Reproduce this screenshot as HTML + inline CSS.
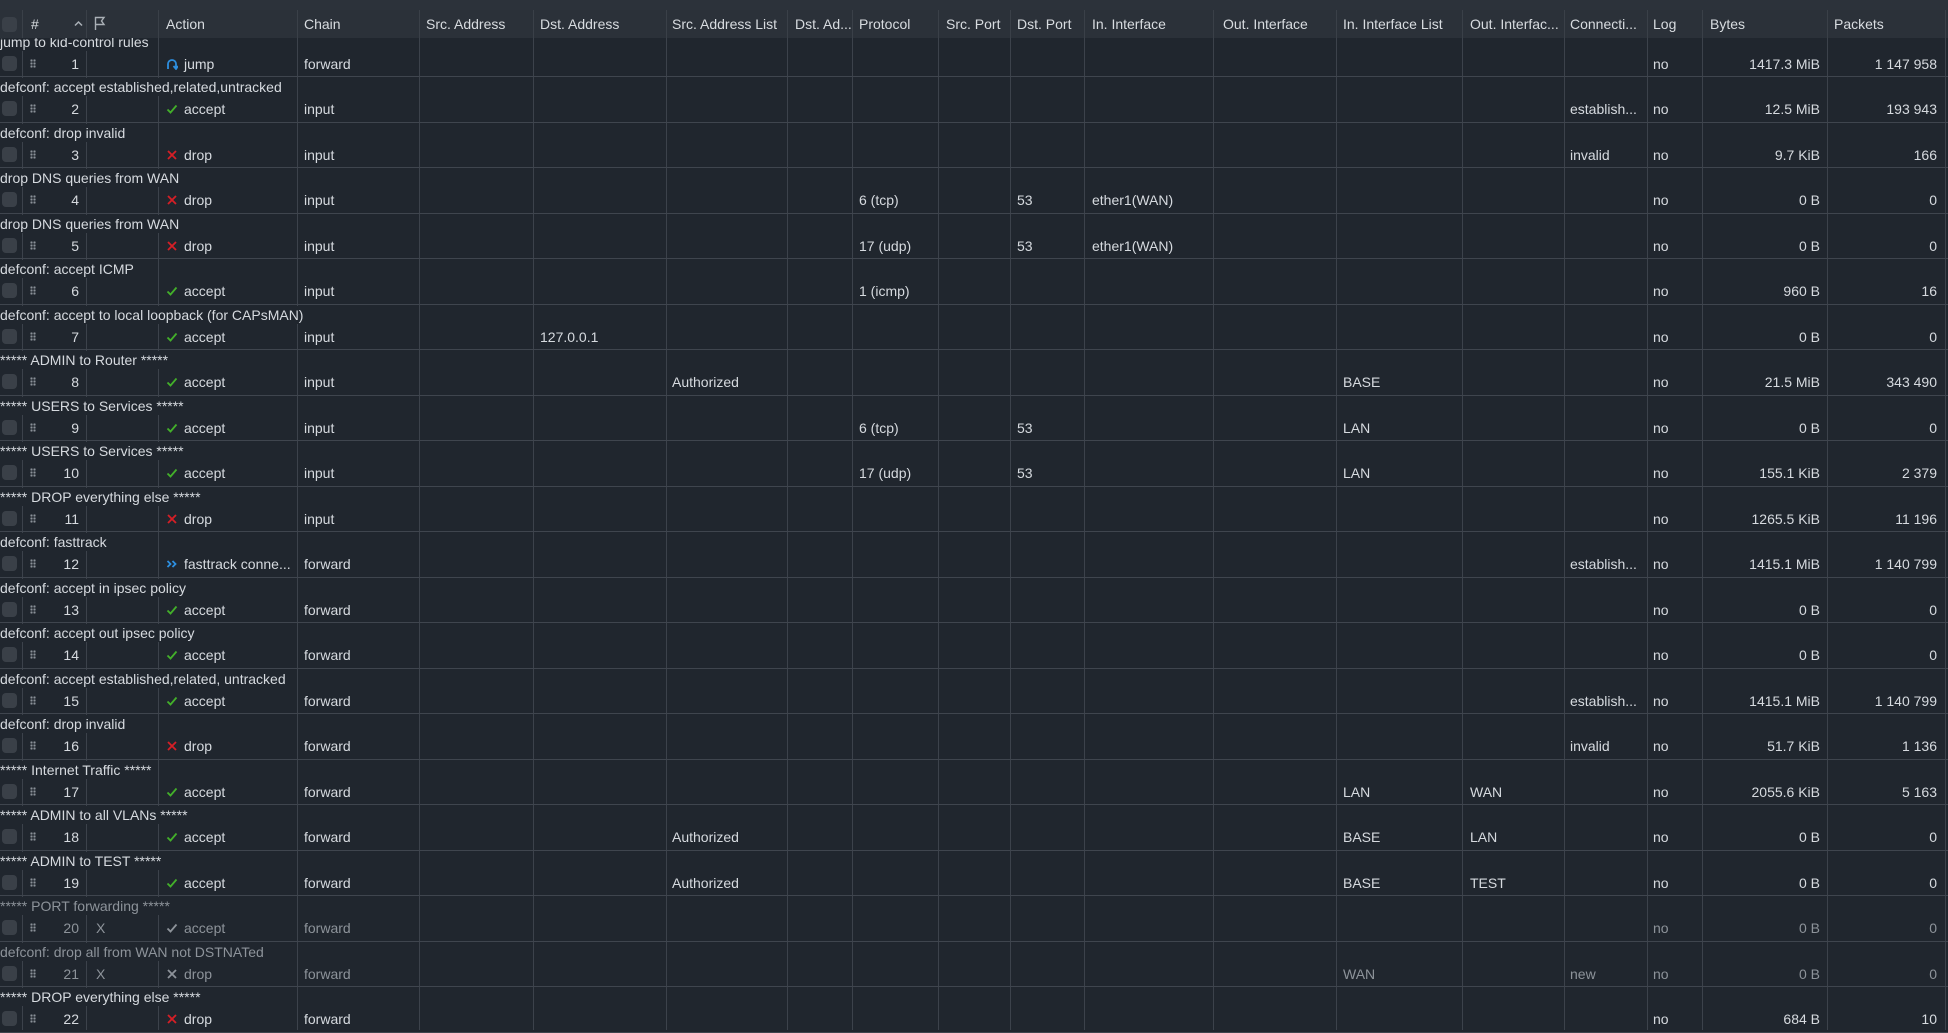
<!DOCTYPE html>
<html><head><meta charset="utf-8"><style>
*{margin:0;padding:0;box-sizing:border-box}
body{width:1948px;height:1030px;overflow:hidden;background:#20262e;font-family:"Liberation Sans",sans-serif;font-size:14px;color:#d6dadf;position:relative}
.top{position:absolute;left:0;top:0;width:1948px;height:10px;background:#2c323a}
.hdr{position:absolute;left:0;top:10px;width:1948px;height:28px;background:#2b3139;z-index:5}
.hdr span{position:absolute;top:0;line-height:28px;color:#d8dce0;white-space:nowrap}
.vl{position:absolute;top:10px;bottom:0;width:1px;background:#3c424b;z-index:1}
.hl{position:absolute;top:0;height:28px;width:1px;background:#3a4048}
.b{position:absolute;left:0;width:1948px;height:45.5px;border-bottom:1px solid #3f454e;z-index:2}
.cm{position:absolute;left:0;top:1px;line-height:18px;background:#20262e;padding-right:2px;white-space:nowrap;z-index:3}
.d{position:absolute;top:22px;line-height:20px;white-space:nowrap}
.cb{position:absolute;left:2px;top:24px;width:15px;height:15px;border-radius:4px;background:#3a4048;z-index:3}
.g{position:absolute;left:30px;top:27px;width:6px;height:9px;background:radial-gradient(circle,#8a9098 1px,transparent 1.3px) 0 0/3px 3px;z-index:3}
.n{right:1869px;text-align:right}
.a{left:184px}.ai{position:absolute;left:166px;top:26px;width:12px;height:12px}
.ch{left:304px}.dst{left:540px}.sl{left:672px}.pr{left:859px}.dp{left:1017px}.ii{left:1092px}.il{left:1343px}.ol{left:1470px}.co{left:1570px}.lg{left:1653px}
.by{right:128px}.pk{right:11px}
.x{left:96px}
.dis{color:#8d939a}
</style></head><body>
<div class="top"></div>
<div class="hdr">
<div class="hl" style="left:22px"></div><div class="hl" style="left:86px"></div><div class="hl" style="left:158px"></div><div class="hl" style="left:297px"></div><div class="hl" style="left:419px"></div><div class="hl" style="left:533px"></div><div class="hl" style="left:666px"></div><div class="hl" style="left:787px"></div><div class="hl" style="left:852px"></div><div class="hl" style="left:938px"></div><div class="hl" style="left:1010px"></div><div class="hl" style="left:1084px"></div><div class="hl" style="left:1213px"></div><div class="hl" style="left:1336px"></div><div class="hl" style="left:1462px"></div><div class="hl" style="left:1564px"></div><div class="hl" style="left:1647px"></div><div class="hl" style="left:1702px"></div><div class="hl" style="left:1827px"></div><div class="hl" style="left:1945px"></div>
<div style="position:absolute;left:2px;top:7px;width:15px;height:15px;border-radius:4px;background:#3a4048"></div>
<span style="left:31px">#</span>
<svg style="position:absolute;left:74px;top:10px" width="9" height="7" viewBox="0 0 9 7"><path d="M1 5.5L4.5 2L8 5.5" stroke="#aab0b6" stroke-width="1.5" fill="none"/></svg>
<svg style="position:absolute;left:94px;top:6px" width="12" height="15" viewBox="0 0 12 15"><path d="M1.5 14V1.5H10L7.5 5L10 8.5H1.5" stroke="#aab0b6" stroke-width="1.4" fill="none"/></svg>
<span style="left:166px">Action</span><span style="left:304px">Chain</span><span style="left:426px">Src. Address</span><span style="left:540px">Dst. Address</span><span style="left:672px">Src. Address List</span><span style="left:795px">Dst. Ad...</span><span style="left:859px">Protocol</span><span style="left:946px">Src. Port</span><span style="left:1017px">Dst. Port</span><span style="left:1092px">In. Interface</span><span style="left:1223px">Out. Interface</span><span style="left:1343px">In. Interface List</span><span style="left:1470px">Out. Interfac...</span><span style="left:1570px">Connecti...</span><span style="left:1653px">Log</span><span style="left:1710px">Bytes</span><span style="left:1834px">Packets</span>
</div>
<div class="vl" style="left:22px"></div><div class="vl" style="left:86px"></div><div class="vl" style="left:158px"></div><div class="vl" style="left:297px"></div><div class="vl" style="left:419px"></div><div class="vl" style="left:533px"></div><div class="vl" style="left:666px"></div><div class="vl" style="left:787px"></div><div class="vl" style="left:852px"></div><div class="vl" style="left:938px"></div><div class="vl" style="left:1010px"></div><div class="vl" style="left:1084px"></div><div class="vl" style="left:1213px"></div><div class="vl" style="left:1336px"></div><div class="vl" style="left:1462px"></div><div class="vl" style="left:1564px"></div><div class="vl" style="left:1647px"></div><div class="vl" style="left:1702px"></div><div class="vl" style="left:1827px"></div><div class="vl" style="left:1945px"></div>

<svg width="0" height="0" style="position:absolute"><defs>
<symbol id="ok" viewBox="0 0 12 12"><path d="M1.5 6.5L4.5 9.5L10.5 2.5" stroke="currentColor" stroke-width="1.8" fill="none"/></symbol>
<symbol id="no" viewBox="0 0 12 12"><path d="M2 2L10 10M10 2L2 10" stroke="currentColor" stroke-width="1.8" fill="none"/></symbol>
</defs></svg>

<div class="b" style="top:31.5px"><span class="cm">jump to kid-control rules</span><div class="cb"></div><div class="g"></div><span class="d n">1</span><svg class="ai" viewBox="0 0 12 12"><path d="M2 11V6a4 4 0 0 1 8 0v4M7.5 8L10 11L12 8" stroke="#2d8fe0" stroke-width="1.8" fill="none"/></svg><span class="d a">jump</span><span class="d ch">forward</span><span class="d lg">no</span><span class="d by">1417.3 MiB</span><span class="d pk">1 147 958</span></div>
<div class="b" style="top:77px"><span class="cm">defconf: accept established,related,untracked</span><div class="cb"></div><div class="g"></div><span class="d n">2</span><svg class="ai" style="color:#43b02a"><use href="#ok"/></svg><span class="d a">accept</span><span class="d ch">input</span><span class="d co">establish...</span><span class="d lg">no</span><span class="d by">12.5 MiB</span><span class="d pk">193 943</span></div>
<div class="b" style="top:122.5px"><span class="cm">defconf: drop invalid</span><div class="cb"></div><div class="g"></div><span class="d n">3</span><svg class="ai" style="color:#d61f26"><use href="#no"/></svg><span class="d a">drop</span><span class="d ch">input</span><span class="d co">invalid</span><span class="d lg">no</span><span class="d by">9.7 KiB</span><span class="d pk">166</span></div>
<div class="b" style="top:168px"><span class="cm">drop DNS queries from WAN</span><div class="cb"></div><div class="g"></div><span class="d n">4</span><svg class="ai" style="color:#d61f26"><use href="#no"/></svg><span class="d a">drop</span><span class="d ch">input</span><span class="d pr">6 (tcp)</span><span class="d dp">53</span><span class="d ii">ether1(WAN)</span><span class="d lg">no</span><span class="d by">0 B</span><span class="d pk">0</span></div>
<div class="b" style="top:213.5px"><span class="cm">drop DNS queries from WAN</span><div class="cb"></div><div class="g"></div><span class="d n">5</span><svg class="ai" style="color:#d61f26"><use href="#no"/></svg><span class="d a">drop</span><span class="d ch">input</span><span class="d pr">17 (udp)</span><span class="d dp">53</span><span class="d ii">ether1(WAN)</span><span class="d lg">no</span><span class="d by">0 B</span><span class="d pk">0</span></div>
<div class="b" style="top:259px"><span class="cm">defconf: accept ICMP</span><div class="cb"></div><div class="g"></div><span class="d n">6</span><svg class="ai" style="color:#43b02a"><use href="#ok"/></svg><span class="d a">accept</span><span class="d ch">input</span><span class="d pr">1 (icmp)</span><span class="d lg">no</span><span class="d by">960 B</span><span class="d pk">16</span></div>
<div class="b" style="top:304.5px"><span class="cm">defconf: accept to local loopback (for CAPsMAN)</span><div class="cb"></div><div class="g"></div><span class="d n">7</span><svg class="ai" style="color:#43b02a"><use href="#ok"/></svg><span class="d a">accept</span><span class="d ch">input</span><span class="d dst">127.0.0.1</span><span class="d lg">no</span><span class="d by">0 B</span><span class="d pk">0</span></div>
<div class="b" style="top:350px"><span class="cm">***** ADMIN to Router *****</span><div class="cb"></div><div class="g"></div><span class="d n">8</span><svg class="ai" style="color:#43b02a"><use href="#ok"/></svg><span class="d a">accept</span><span class="d ch">input</span><span class="d sl">Authorized</span><span class="d il">BASE</span><span class="d lg">no</span><span class="d by">21.5 MiB</span><span class="d pk">343 490</span></div>
<div class="b" style="top:395.5px"><span class="cm">***** USERS to Services *****</span><div class="cb"></div><div class="g"></div><span class="d n">9</span><svg class="ai" style="color:#43b02a"><use href="#ok"/></svg><span class="d a">accept</span><span class="d ch">input</span><span class="d pr">6 (tcp)</span><span class="d dp">53</span><span class="d il">LAN</span><span class="d lg">no</span><span class="d by">0 B</span><span class="d pk">0</span></div>
<div class="b" style="top:441px"><span class="cm">***** USERS to Services *****</span><div class="cb"></div><div class="g"></div><span class="d n">10</span><svg class="ai" style="color:#43b02a"><use href="#ok"/></svg><span class="d a">accept</span><span class="d ch">input</span><span class="d pr">17 (udp)</span><span class="d dp">53</span><span class="d il">LAN</span><span class="d lg">no</span><span class="d by">155.1 KiB</span><span class="d pk">2 379</span></div>
<div class="b" style="top:486.5px"><span class="cm">***** DROP everything else *****</span><div class="cb"></div><div class="g"></div><span class="d n">11</span><svg class="ai" style="color:#d61f26"><use href="#no"/></svg><span class="d a">drop</span><span class="d ch">input</span><span class="d lg">no</span><span class="d by">1265.5 KiB</span><span class="d pk">11 196</span></div>
<div class="b" style="top:532px"><span class="cm">defconf: fasttrack</span><div class="cb"></div><div class="g"></div><span class="d n">12</span><svg class="ai" viewBox="0 0 12 12"><path d="M1.5 3L4.5 6L1.5 9M6.5 3L9.5 6L6.5 9" stroke="#2d8fe0" stroke-width="1.8" fill="none"/></svg><span class="d a">fasttrack conne...</span><span class="d ch">forward</span><span class="d co">establish...</span><span class="d lg">no</span><span class="d by">1415.1 MiB</span><span class="d pk">1 140 799</span></div>
<div class="b" style="top:577.5px"><span class="cm">defconf: accept in ipsec policy</span><div class="cb"></div><div class="g"></div><span class="d n">13</span><svg class="ai" style="color:#43b02a"><use href="#ok"/></svg><span class="d a">accept</span><span class="d ch">forward</span><span class="d lg">no</span><span class="d by">0 B</span><span class="d pk">0</span></div>
<div class="b" style="top:623px"><span class="cm">defconf: accept out ipsec policy</span><div class="cb"></div><div class="g"></div><span class="d n">14</span><svg class="ai" style="color:#43b02a"><use href="#ok"/></svg><span class="d a">accept</span><span class="d ch">forward</span><span class="d lg">no</span><span class="d by">0 B</span><span class="d pk">0</span></div>
<div class="b" style="top:668.5px"><span class="cm">defconf: accept established,related, untracked</span><div class="cb"></div><div class="g"></div><span class="d n">15</span><svg class="ai" style="color:#43b02a"><use href="#ok"/></svg><span class="d a">accept</span><span class="d ch">forward</span><span class="d co">establish...</span><span class="d lg">no</span><span class="d by">1415.1 MiB</span><span class="d pk">1 140 799</span></div>
<div class="b" style="top:714px"><span class="cm">defconf: drop invalid</span><div class="cb"></div><div class="g"></div><span class="d n">16</span><svg class="ai" style="color:#d61f26"><use href="#no"/></svg><span class="d a">drop</span><span class="d ch">forward</span><span class="d co">invalid</span><span class="d lg">no</span><span class="d by">51.7 KiB</span><span class="d pk">1 136</span></div>
<div class="b" style="top:759.5px"><span class="cm">***** Internet Traffic *****</span><div class="cb"></div><div class="g"></div><span class="d n">17</span><svg class="ai" style="color:#43b02a"><use href="#ok"/></svg><span class="d a">accept</span><span class="d ch">forward</span><span class="d il">LAN</span><span class="d ol">WAN</span><span class="d lg">no</span><span class="d by">2055.6 KiB</span><span class="d pk">5 163</span></div>
<div class="b" style="top:805px"><span class="cm">***** ADMIN to all VLANs *****</span><div class="cb"></div><div class="g"></div><span class="d n">18</span><svg class="ai" style="color:#43b02a"><use href="#ok"/></svg><span class="d a">accept</span><span class="d ch">forward</span><span class="d sl">Authorized</span><span class="d il">BASE</span><span class="d ol">LAN</span><span class="d lg">no</span><span class="d by">0 B</span><span class="d pk">0</span></div>
<div class="b" style="top:850.5px"><span class="cm">***** ADMIN to TEST *****</span><div class="cb"></div><div class="g"></div><span class="d n">19</span><svg class="ai" style="color:#43b02a"><use href="#ok"/></svg><span class="d a">accept</span><span class="d ch">forward</span><span class="d sl">Authorized</span><span class="d il">BASE</span><span class="d ol">TEST</span><span class="d lg">no</span><span class="d by">0 B</span><span class="d pk">0</span></div>
<div class="b dis" style="top:896px"><span class="cm">***** PORT  forwarding *****</span><div class="cb"></div><div class="g"></div><span class="d n">20</span><span class="d x">X</span><svg class="ai" style="color:#8d939a"><use href="#ok"/></svg><span class="d a">accept</span><span class="d ch">forward</span><span class="d lg">no</span><span class="d by">0 B</span><span class="d pk">0</span></div>
<div class="b dis" style="top:941.5px"><span class="cm">defconf: drop all from WAN not DSTNATed</span><div class="cb"></div><div class="g"></div><span class="d n">21</span><span class="d x">X</span><svg class="ai" style="color:#8d939a"><use href="#no"/></svg><span class="d a">drop</span><span class="d ch">forward</span><span class="d il">WAN</span><span class="d co">new</span><span class="d lg">no</span><span class="d by">0 B</span><span class="d pk">0</span></div>
<div class="b" style="top:987px"><span class="cm">***** DROP everything else  *****</span><div class="cb"></div><div class="g"></div><span class="d n">22</span><svg class="ai" style="color:#d61f26"><use href="#no"/></svg><span class="d a">drop</span><span class="d ch">forward</span><span class="d lg">no</span><span class="d by">684 B</span><span class="d pk">10</span></div>
</body></html>
